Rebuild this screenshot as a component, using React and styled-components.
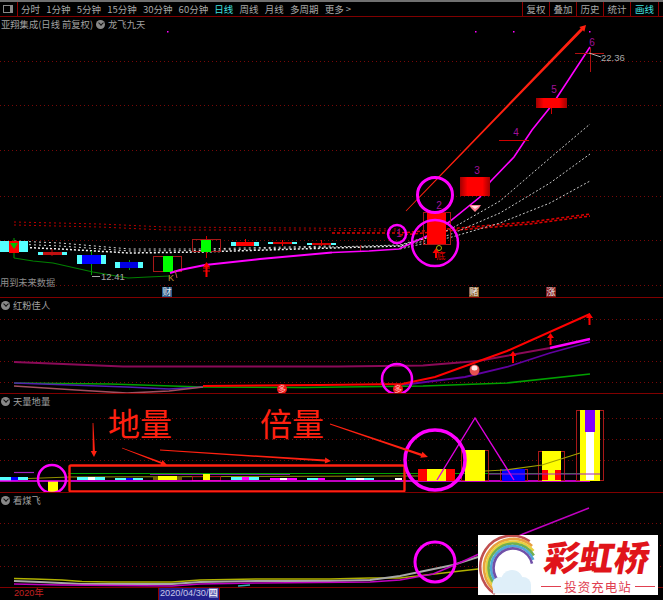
import React from "react";
import styled, { createGlobalStyle } from "styled-components";

const GlobalStyle = createGlobalStyle`
  html, body { margin: 0; background: #000; overflow: hidden; }
  body { font-family: "Noto Sans CJK SC", "Noto Sans", sans-serif; }
`;

const periods = ["分时", "1分钟", "5分钟", "15分钟", "30分钟", "60分钟", "日线", "周线", "月线", "多周期", "更多 >"];
const tools = ["复权", "叠加", "历史", "统计", "画线"];

// every chart is drawn in page coordinates, the viewBox shifts it into its pane
function Chart({ top, h, children }) {
  return (
    <ChartSvg viewBox={`0 ${top} 663 ${h}`} width="663" height={h}>
      {children}
    </ChartSvg>
  );
}

const Line = ({ p, c, w = 1, dash }) => (
  <polyline points={p} fill="none" stroke={c} strokeWidth={w} strokeDasharray={dash} />
);

const Grid = ({ ys }) =>
  ys.map((y) => <Line key={y} p={`0,${y + 0.5} 663,${y + 0.5}`} c="#780808" dash="1 3" />);

const Ring = ({ x, y, r, w = 3 }) => <circle cx={x} cy={y} r={r} fill="none" stroke="#ff00ff" strokeWidth={w} />;

const Box = ({ x, y, x2, y2, c }) => <rect x={x} y={y} width={x2 - x} height={y2 - y} fill={c} />;

const Frame = ({ x, y, x2, y2 }) => (
  <rect x={x + 0.5} y={y + 0.5} width={x2 - x - 1} height={y2 - y - 1} fill="none" stroke="#a81818" />
);

// flat candle: cyan ends with a coloured middle
const Candle = ({ x, x2, y, y2, c }) => (
  <>
    <Box x={x} y={y} x2={x2} y2={y2} c="#55ffff" />
    <Box x={x + 5} y={y} x2={x2 - 5} y2={y2} c={c} />
  </>
);

const UpArrow = ({ x, y, h = 12, c = "#ff0000" }) => (
  <path d={`M${x} ${y}l-3.5 5h2.5v${h - 5}h2v-${h - 5}h2.5z`} fill={c} />
);

// hand drawn arrow that gets thicker towards its head
function Stroke({ x1, y1, x2, y2, w = 2, head = 7 }) {
  const len = Math.hypot(x2 - x1, y2 - y1);
  const ux = (x2 - x1) / len;
  const uy = (y2 - y1) / len;
  const nx = -uy;
  const ny = ux;
  const bx = x2 - ux * head;
  const by = y2 - uy * head;
  const pts = [
    [x1 + nx * 0.4, y1 + ny * 0.4],
    [bx + nx * w, by + ny * w],
    [bx + nx * (w + 2), by + ny * (w + 2)],
    [x2, y2],
    [bx - nx * (w + 2), by - ny * (w + 2)],
    [bx - nx * w, by - ny * w],
    [x1 - nx * 0.4, y1 - ny * 0.4],
  ];
  return <polygon points={pts.map((q) => q.join(",")).join(" ")} fill="#ff2010" />;
}

const Num = ({ x, y, children }) => (
  <ChartText x={x} y={y} fill="#a0109a" fontSize="10" textAnchor="middle">
    {children}
  </ChartText>
);

function MainChart() {
  return (
    <Chart top={17} h={280}>
      <defs>
        <linearGradient id="bar" x1="0" x2="1" y1="0" y2="0">
          <stop offset="0" stopColor="#a00000" />
          <stop offset="0.25" stopColor="#ff0000" />
          <stop offset="0.75" stopColor="#ff0000" />
          <stop offset="1" stopColor="#a00000" />
        </linearGradient>
      </defs>
      <Grid ys={[61, 105, 150, 196, 240, 285]} />
      {[167, 475, 513, 589].map((x) => (
        <rect key={x} x={x} y={31} width={1.5} height={1.5} fill="#ff00ff" />
      ))}

      {/* red dotted averages */}
      <Line p="14,222 100,224 166,227 300,228 400,229" c="#b80000" dash="2 3" />
      <Line p="14,225 100,227 166,230 300,230 400,231" c="#b80000" dash="2 3" />
      <Line p="332,233 400,233 470,227 530,222 590,214" c="#e00000" w={1.5} dash="3 2" />
      <Line p="400,235 470,229 530,224 590,216" c="#e00000" w={1.5} dash="3 2" />

      {/* white dotted averages */}
      <Line p="14,241 60,243 130,249 200,249 332,246" c="#d8d8d8" dash="2 3" />
      <Line p="14,244 60,246 130,251 200,250.5 332,247" c="#d8d8d8" dash="2 3" />
      <Line p="14,247 60,249 130,253 200,252 332,248 400,246 432,236" c="#f4f4f4" w={1.5} dash="2 2" />
      <Line p="332,247 400,245 449,230 500,201 550,158 590,124" c="#c8c8c8" dash="2 2" />
      <Line p="400,247 449,235 500,213 550,183 590,154" c="#c8c8c8" dash="2 2" />
      <Line p="400,249 452,237 500,223 550,203 590,181" c="#c8c8c8" dash="2 2" />

      {/* candles */}
      <Line p="14,238 14,258" c="#00a000" />
      <Box x={0} y={241} x2={28} y2={252} c="#55ffff" />
      <Box x={9} y={241} x2={19} y2={253} c="#ff0000" />
      <path d="M10 243h8l-4 6z" fill="#00c000" />
      <Line p="52,249 52,256" c="#c00000" />
      <Candle x={38} x2={67} y={252} y2={255} c="#c01010" />
      <Line p="91.5,251 91.5,275" c="#00a000" />
      <Candle x={77} x2={106} y={255} y2={264} c="#0000ff" />
      <Line p="129.5,260 129.5,270" c="#00a000" />
      <Candle x={115} x2={143} y={262} y2={268} c="#0000e0" />
      <Frame x={153} y={256} x2={182} y2={272} />
      <Box x={163} y={256} x2={173} y2={272} c="#00ff00" />
      <Line p="206.5,236 206.5,258" c="#d00000" />
      <Frame x={192} y={239} x2={221} y2={252} />
      <Box x={201} y={240} x2={211} y2={252} c="#00ff00" />
      <Line p="245.5,239 245.5,246" c="#ff0000" />
      <Candle x={231} x2={259} y={242} y2={246} c="#ff0000" />
      <Line p="282.5,240 282.5,246" c="#ff0000" />
      <Candle x={268} x2={297} y={242} y2={244} c="#d00000" />
      <Line p="321.5,240 321.5,246" c="#ff0000" />
      <Candle x={307} x2={336} y={243} y2={245} c="#d00000" />
      <Line p="360.5,245 360.5,252" c="#a01010" />

      {/* price lines */}
      <Line p="14,258 33,261 53,263 93,272 128,278 148,277 170,276" c="#008000" w={1.2} />
      <Line p="170,273 180,270 205,265 260,259 332,252.5" c="#ff00ff" w={2} />
      <Line p="332,252.5 369,251 399,249 427,236 449,222 480,197 490,182 514,157 532,130 552,105 590,47" c="#ff00ff" w={1.6} />
      <Line p="175,270 177,278" c="#c05050" />
      <UpArrow x={206.5} y={262} h={15} />
      <Line p="203,268 210,268" c="#ff0000" />
      <Line p="203,271 210,271" c="#ff0000" />

      <Frame x={423} y={212} x2={451} y2={245} />
      <Box x={427} y={213} x2={446} y2={244} c="#ff0000" />
      <Box x={460} y={177} x2={490} y2={196} c="url(#bar)" />
      <Line p="499,140.5 529,140.5" c="#d00000" />
      <Box x={536} y={98} x2={567} y2={108} c="url(#bar)" />
      <Line p="551.5,108 551.5,114" c="#d00000" />
      <Line p="575,53.5 604,53.5" c="#b01010" />
      <Line p="590.5,48 590.5,72" c="#b01010" />

      <Stroke x1={406} y1={211} x2={586} y2={25} w={1.5} head={6} />

      <Num x={399} y={237}>1</Num>
      <Num x={439} y={209}>2</Num>
      <Num x={477} y={174}>3</Num>
      <Num x={516} y={136}>4</Num>
      <Num x={554} y={93}>5</Num>
      <Num x={592} y={46}>6</Num>

      <Ring x={435} y={195} r={17.5} w={3} />
      <Ring x={435} y={243} r={23} w={2.5} />
      <Ring x={397} y={234} r={9} w={2.5} />

      <UpArrow x={436} y={248} h={10} />
      <ChartText x={441} y={259} fill="#e00000" fontSize="9" textAnchor="middle">底</ChartText>
      <circle cx={439} cy={248} r={2.5} fill="none" stroke="#b0b000" />
      <path d="M469 205h12l-2 3-4 4-4-4z" fill="#ff8090" />
      <path d="M471 206h8l-4 3z" fill="#ffe0e0" />

      <Line p="589,53 601,57" c="#b0b0b0" />
      <ChartText x={601} y={61} fill="#a8a8a8" fontSize="9.5">22.36</ChartText>
      <Line p="92,276.5 100,276.5" c="#a8a8a8" />
      <ChartText x={101} y={280} fill="#a8a8a8" fontSize="9.5">12.41</ChartText>
      <ChartText x={168} y={281} fill="#c09030" fontSize="9">K</ChartText>
      <ChartText x={0} y={286} fill="#8c8c8c" fontSize="9.2">用到未来数据</ChartText>
    </Chart>
  );
}

function RedChart() {
  return (
    <Chart top={299} h={95}>
      <Grid ys={[320, 341, 362, 383]} />
      <Line p="14,363 63,365 123,367.5 338,367.5 423,366.5 478,362 550,349" c="#8a0a58" w={2} />
      <Line p="550,349 590,340" c="#ff00ff" w={2.4} />
      <Line p="402,386 465,378 507,368 550,354 590,343" c="#6000a0" w={1.8} />
      <Line p="14,384 110,385 203,388 304,388.5 423,387 507,384 590,375" c="#00a000" w={1.6} />
      <Line p="14,384 127,388 169,390 203,388" c="#5020b0" w={1.6} />
      <Line p="14,387 76,391 127,394 169,392 203,388" c="#a05060" w={1.6} />
      <Line p="203,387 320,386 402,385 435,378 507,352 590,315" c="#ff0000" w={2} />
      <Ring x={397} y={380} r={15} w={2.5} />
      <ellipse cx={282} cy={390} rx={5} ry={5} fill="#f01818" />
      <ChartText x={282} y={393} fill="#ffb0b0" fontSize="8" textAnchor="middle">多</ChartText>
      <ellipse cx={398} cy={390} rx={5} ry={5} fill="#f01818" />
      <ChartText x={398} y={393} fill="#ffb0b0" fontSize="8" textAnchor="middle">多</ChartText>
      <ellipse cx={474.5} cy={371} rx={5} ry={5.5} fill="#e85050" />
      <ellipse cx={474.5} cy={369} rx={3} ry={2.5} fill="#ffe8e8" />
      <UpArrow x={513} y={352} />
      <UpArrow x={550.5} y={334} />
      <UpArrow x={589.5} y={314} />
    </Chart>
  );
}

function VolumeChart() {
  return (
    <Chart top={395} h={98}>
      <Grid ys={[419, 440, 461]} />
      <Line p="14,473.5 34,473.5" c="#a020c0" w={1.2} />
      <Line p="68,474.5 580,474.5" c="#00a000" w={1.2} />
      <Line p="150,475.5 290,475.5" c="#8020a0" />
      <Line p="14,480 70,478 400,477 420,477" c="#909000" />
      <Box x={0} y={478} x2={11} y2={482} c="#55ffff" />
      <Box x={11} y={478} x2={18} y2={482} c="#0000ff" />
      <Box x={18} y={478} x2={28} y2={481} c="#55ffff" />
      <Box x={48} y={482} x2={58} y2={493} c="#ffff00" />
      <Box x={77} y={478} x2={105} y2={481} c="#55ffff" />
      <Box x={88} y={478} x2={95} y2={481} c="#ffffff" />
      <Box x={115} y={479} x2={143} y2={481} c="#55ffff" />
      <Box x={126} y={479} x2={133} y2={481} c="#0000ff" />
      <Box x={153} y={477} x2={182} y2={481} c="#706000" />
      <Box x={158} y={477} x2={177} y2={481} c="#ffff00" />
      <Frame x={192} y={477} x2={221} y2={482} />
      <Box x={203} y={475} x2={210} y2={481} c="#ffff00" />
      <Box x={231} y={478} x2={259} y2={481} c="#55ffff" />
      <Box x={242} y={478} x2={249} y2={481} c="#ff00ff" />
      <Box x={270} y={479} x2={297} y2={481} c="#ff00ff" />
      <Box x={280} y={479} x2={287} y2={481} c="#ffffff" />
      <Box x={307} y={479} x2={318} y2={481} c="#55ffff" />
      <Box x={318} y={479} x2={325} y2={481} c="#ff00ff" />
      <Box x={346} y={479} x2={356} y2={481} c="#55ffff" />
      <Box x={356} y={479} x2={364} y2={481} c="#ffffff" />
      <Box x={364} y={479} x2={374} y2={481} c="#55ffff" />
      <Box x={395} y={479} x2={402} y2={481} c="#ffffff" />
      <Line p="0,482 590,482" c="#ff00ff" w={1.4} />

      <Box x={418} y={470} x2={455} y2={482} c="#ff0000" />
      <Box x={427} y={470} x2={446} y2={482} c="#ffff00" />
      <Frame x={461} y={451} x2={489} y2={482} />
      <Box x={465} y={451} x2={485} y2={482} c="#ffff00" />
      <Frame x={500} y={470} x2={528} y2={482} />
      <Box x={502} y={470} x2={525} y2={482} c="#0000ff" />
      <Frame x={538} y={452} x2={565} y2={482} />
      <Box x={542} y={452} x2={561} y2={482} c="#ffff00" />
      <Box x={542} y={471} x2={548} y2={481} c="#ff0000" />
      <Box x={555} y={471} x2={561} y2={481} c="#ff0000" />
      <Frame x={576} y={411} x2={604} y2={482} />
      <Box x={580} y={411} x2={600} y2={482} c="#ffff00" />
      <Box x={585} y={411} x2={595} y2={433} c="#8000ff" />
      <Box x={586} y={433} x2={594} y2={481} c="#ffffff" />

      <Line p="485,472 505,471 542,466 580,454" c="#a0a000" w={1.2} />
      <Line p="489,475 600,475" c="#a020c0" />
      <Line p="437,481 475,419 514,481" c="#e000e0" w={1.4} />

      <rect x={69.5} y={466.5} width={335} height={26} rx={1.5} fill="none" stroke="#ff2010" strokeWidth={2.4} />
      <Ring x={52} y={480} r={14} w={2.5} />
      <Ring x={435} y={461} r={30} w={3.5} />
      <Stroke x1={93} y1={424} x2={94} y2={458} w={1.1} head={6} />
      <Stroke x1={122} y1={449} x2={167} y2={466} w={1} head={6} />
      <Stroke x1={160} y1={451} x2={331} y2={462} w={1} head={6} />
      <Stroke x1={330} y1={425} x2={428} y2={458} w={1.2} head={7} />
      <Callout x={108} y={437}>地量</Callout>
      <Callout x={260} y={437}>倍量</Callout>
    </Chart>
  );
}

function FlyChart() {
  return (
    <Chart top={495} h={94}>
      <Grid ys={[525, 547, 568]} />
      <Line p="14,580.5 34,581 62,582 82,583.5 110,584 172,584 200,582 260,581 330,581 370,580 400,580 478,571" c="#b0b000" w={1.5} />
      <Line p="14,583 40,584 82,586 172,586 200,584 260,583 330,583 370,582 400,578 453,567 478,559" c="#a8a8a8" w={2} />
      <Line p="14,586 60,587 172,588 200,586 260,585 370,584 400,582 433,576 457,566 523,536 589,510" c="#c000c0" w={1.5} />
      <Line p="238,588 250,587" c="#30b0b0" w={1.5} />
      <Ring x={435} y={564} r={20} w={3} />
    </Chart>
  );
}

// rainbow bands fray out on the right, the outer ones stop earlier
function arcPath(r, endDeg) {
  const pt = (deg) => {
    const a = (deg * Math.PI) / 180;
    return `${(35 + r * Math.cos(a)).toFixed(1)} ${(33 - r * Math.sin(a)).toFixed(1)}`;
  };
  return `M${pt(235)}A${r} ${r} 0 1 1 ${pt(endDeg)}`;
}

function RainbowLogo() {
  const colors = ["#c05050", "#e8a040", "#e8d040", "#70b050", "#50a8d8", "#7050a8"];
  return (
    <LogoArt viewBox="0 0 60 60" width="60" height="60">
      {colors.map((c, i) => (
        <path key={c} d={arcPath(31.5 - i * 2.4, 58 - i * 9)} fill="none" stroke={c} strokeWidth="2.6" />
      ))}
      <g fill="#dfeff9">
        <ellipse cx="22" cy="50" rx="8" ry="8" />
        <ellipse cx="34" cy="46" rx="11" ry="11" />
        <ellipse cx="45" cy="50" rx="8" ry="8" />
        <rect x="15" y="50" width="38" height="8.5" />
      </g>
    </LogoArt>
  );
}

export default function App() {
  return (
    <Page>
      <GlobalStyle />
      <Toolbar>
        <PanelToggle />
        <Tabs>
          {periods.map((t) => (
            <Tab key={t} $active={t === "日线"}>{t}</Tab>
          ))}
        </Tabs>
        <Tools>
          {tools.map((t) => (
            <Tool key={t} $active={t === "画线"}>{t}</Tool>
          ))}
        </Tools>
      </Toolbar>

      <Pane $h={281}>
        <MainChart />
        <TitleRow>
          <span>亚翔集成(日线 前复权)</span>
          <Chevron />
          <span>龙飞九天</span>
        </TitleRow>
        <Tag $x={162} $bg="#2a5a8a">财</Tag>
        <Tag $x={469} $bg="#8a5a28">赌</Tag>
        <Tag $x={546} $bg="#801818">涨</Tag>
      </Pane>
      <Pane $h={96}>
        <RedChart />
        <TitleRow><Chevron /><span>红粉佳人</span></TitleRow>
      </Pane>
      <Pane $h={99}>
        <VolumeChart />
        <TitleRow><Chevron /><span>天量地量</span></TitleRow>
      </Pane>
      <Pane $h={95}>
        <FlyChart />
        <TitleRow><Chevron /><span>看煤飞</span></TitleRow>
      </Pane>

      <Axis>
        <Year>2020年</Year>
        <DateCursor>2020/04/30/<b>四</b></DateCursor>
      </Axis>

      <LogoCard>
        <RainbowLogo />
        <LogoText>
          <LogoName>彩虹桥</LogoName>
          <LogoSub>投资充电站</LogoSub>
        </LogoText>
      </LogoCard>
    </Page>
  );
}

const Page = styled.div`
  position: relative;
  width: 663px;
  height: 600px;
  overflow: hidden;
  background: #000;
  display: flex;
  flex-direction: column;
`;

const Toolbar = styled.div`
  box-sizing: border-box;
  height: 17px;
  flex: none;
  display: flex;
  align-items: center;
  border-top: 2px solid #707070;
  border-bottom: 1px solid #800000;
  color: #a8a8a8;
  font-size: 9.5px;
  line-height: 14px;
`;

const PanelToggle = styled.i`
  flex: none;
  width: 6px;
  height: 6px;
  margin: 0 3px;
  border: 1px solid #888;
  border-right-width: 3px;
`;

const Tabs = styled.div`
  display: flex;
  gap: 6.2px;
  margin-left: 1px;
  padding-left: 3px;
  border-left: 1px solid #900000;
`;

const Tab = styled.span`
  white-space: nowrap;
  color: ${(p) => (p.$active ? "#40e0e0" : "#a8a8a8")};
`;

const Tools = styled.div`
  display: flex;
  margin-left: auto;
  margin-right: 4px;
`;

const Tool = styled.span`
  width: 26px;
  text-align: center;
  white-space: nowrap;
  border-left: 1px solid #900000;
  color: ${(p) => (p.$active ? "#40e0e0" : "#a8a8a8")};
  &:last-child { border-right: 1px solid #900000; width: 27px; }
`;

const Pane = styled.section`
  position: relative;
  flex: none;
  box-sizing: border-box;
  height: ${(p) => p.$h}px;
  border-bottom: 1px solid #800000;
`;

const ChartSvg = styled.svg`
  position: absolute;
  left: 0;
  top: 0;
  display: block;
`;

const ChartText = styled.text`
  font-family: "Liberation Sans", "Noto Sans CJK SC", sans-serif;
`;

const Callout = styled.text`
  font-family: "Noto Sans CJK SC", sans-serif;
  font-size: 32px;
  fill: #ff2010;
`;

const TitleRow = styled.div`
  position: absolute;
  left: 1px;
  top: 0;
  display: flex;
  align-items: center;
  gap: 3px;
  color: #a0a0a0;
  font-size: 9.3px;
  line-height: 14px;
  white-space: nowrap;
`;

const Chevron = styled.i`
  position: relative;
  flex: none;
  width: 9px;
  height: 9px;
  border-radius: 50%;
  background: #888;
  &::after {
    content: "";
    position: absolute;
    left: 2.5px;
    top: 1.5px;
    width: 3px;
    height: 3px;
    border-right: 1px solid #111;
    border-bottom: 1px solid #111;
    transform: rotate(45deg);
  }
`;

const Tag = styled.span`
  position: absolute;
  left: ${(p) => p.$x}px;
  bottom: 0;
  width: 10px;
  height: 10px;
  background: ${(p) => p.$bg};
  color: #e8e8e8;
  font-size: 9px;
  line-height: 10px;
  text-align: center;
`;

const Axis = styled.div`
  flex: 1;
  position: relative;
  display: flex;
  font-size: 9.2px;
  line-height: 11px;
  font-family: "Liberation Sans", "Noto Sans CJK SC", sans-serif;
`;

const Year = styled.span`
  margin-left: 14px;
  width: 144px;
  color: #c02020;
`;

const DateCursor = styled.span`
  padding: 0 1px;
  background: #20208c;
  color: #c8c8e8;
  border-left: 1px solid #900000;
  border-right: 1px solid #900000;
  white-space: nowrap;
  b { font-weight: 400; background: #6a6ab8; color: #fff; }
`;

const LogoCard = styled.div`
  position: absolute;
  left: 478px;
  top: 535px;
  width: 180px;
  height: 60px;
  background: #fff;
  display: flex;
`;

const LogoArt = styled.svg`
  flex: none;
  display: block;
`;

const LogoText = styled.div`
  flex: 1;
  display: flex;
  flex-direction: column;
  align-items: center;
`;

const LogoName = styled.div`
  font-family: "Noto Sans CJK SC", sans-serif;
  font-weight: 900;
  font-size: 35px;
  line-height: 42px;
  height: 44px;
  color: #e0141a;
  transform: skewX(-10deg);
  white-space: nowrap;
`;

const LogoSub = styled.div`
  display: flex;
  align-items: center;
  gap: 3px;
  font-size: 12.5px;
  line-height: 15px;
  letter-spacing: 1px;
  color: #e04050;
  white-space: nowrap;
  &::before, &::after {
    content: "";
    width: 20px;
    height: 1px;
    background: #e04050;
  }
`;
